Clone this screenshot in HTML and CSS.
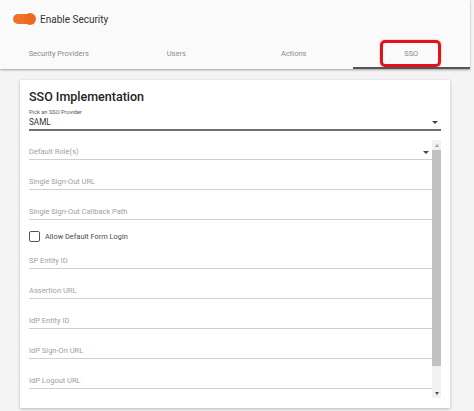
FILE: index.html
```html
<!DOCTYPE html>
<html>
<head>
<meta charset="utf-8">
<link rel="stylesheet" href="styles.css">
</head>
<body>
<div class="page">
  <header class="header">
    <div class="toggle-row">
      <span class="toggle"><span class="knob"></span></span>
      <span class="toggle-label">Enable Security</span>
    </div>
    <nav class="tabs">
      <div class="tab">Security Providers</div>
      <div class="tab">Users</div>
      <div class="tab">Actions</div>
      <div class="tab active">SSO</div>
    </nav>
    <div class="highlight"></div>
  </header>

  <section class="card">
    <h1 class="title">SSO Implementation</h1>
    <div class="select">
      <div class="select-label">Pick an SSO Provider</div>
      <div class="select-value">SAML <span class="arrow"></span></div>
    </div>
    <div class="scroll">
      <div class="fields">
        <div class="field first">Default Role(s) <span class="arrow"></span></div>
        <div class="field">Single Sign-Out URL</div>
        <div class="field">Single Sign-Out Callback Path</div>
        <label class="check-row"><span class="checkbox"></span>Allow Default Form Login</label>
        <div class="field after-check">SP Entity ID</div>
        <div class="field">Assertion URL</div>
        <div class="field">IdP Entity ID</div>
        <div class="field">IdP Sign-On URL</div>
        <div class="field">IdP Logout URL</div>
      </div>
      <div class="scrollbar">
        <span class="sb-up"></span>
        <span class="sb-thumb"></span>
        <span class="sb-down"></span>
      </div>
    </div>
  </section>
</div>
</body>
</html>
```
FILE: styles.css
```css
* { box-sizing: border-box; }
html, body {
  margin: 0;
  padding: 0;
}
body {
  background: #f4f4f4;
  font-family: Roboto, "Liberation Sans", sans-serif;
  width: 474px;
  height: 411px;
  overflow: hidden;
}
.page {
  display: flex;
  flex-direction: column;
}
.header {
  position: relative;
  width: 470px;
  height: 69px;
  background: #fafafa;
  box-shadow: 0 1px 2px rgba(0,0,0,0.35);
  display: flex;
  flex-direction: column;
}
.toggle-row {
  height: 38px;
  display: flex;
  align-items: center;
  padding-left: 13px;
}
.toggle {
  position: relative;
  width: 22px;
  height: 10px;
  border-radius: 5px;
  background: #ee7326;
}
.knob {
  position: absolute;
  right: -1px;
  top: -1px;
  width: 12px;
  height: 12px;
  border-radius: 50%;
  background: #ec6c1e;
}
.toggle-label {
  margin-left: 5px;
  font-size: 10px;
  color: #333;
}
.tabs {
  flex: 1;
  display: grid;
  grid-template-columns: repeat(4, 1fr);
}
.tab {
  display: flex;
  align-items: center;
  justify-content: center;
  font-size: 7.5px;
  color: #8c8c8c;
}
.tab.active {
  border-bottom: 2px solid #555;
  padding-top: 2px;
}
.highlight {
  position: absolute;
  left: 380px;
  top: 40px;
  width: 61px;
  height: 27px;
  border: 3px solid #e0121a;
  border-radius: 5px;
  box-shadow: 0 0 2px rgba(200,0,0,0.4);
}
.card {
  margin: 11px 0 0 20px;
  width: 430px;
  height: 328px;
  background: #fff;
  box-shadow: 0 1px 3px rgba(0,0,0,0.25);
  padding: 8px 9px 0 9px;
  overflow: hidden;
}
.title {
  margin: 0;
  font-size: 12.5px;
  line-height: 18px;
  font-weight: 500;
  color: #222;
}
.select {
  margin-top: 2px;
  border-bottom: 2px solid #707070;
}
.select-label {
  font-size: 5.7px;
  line-height: 8px;
  color: #555;
}
.select-value {
  position: relative;
  font-size: 8.2px;
  line-height: 12px;
  color: #333;
  padding-bottom: 1px;
}
.arrow {
  position: absolute;
  right: 3px;
  top: 5px;
  width: 0;
  height: 0;
  border-left: 3px solid transparent;
  border-right: 3px solid transparent;
  border-top: 3px solid #444;
}
.scroll {
  display: flex;
}
.fields {
  flex: 1;
  display: flex;
  flex-direction: column;
}
.field {
  position: relative;
  margin-top: 16px;
  font-size: 7.5px;
  line-height: 12px;
  color: #a0a0a0;
  padding-bottom: 1px;
  border-bottom: 1px solid #d0d0d0;
}
.field.first { margin-top: 15px; }
.field.after-check { margin-top: 13px; }
.check-row {
  margin-top: 10px;
  height: 12px;
  display: flex;
  align-items: center;
  font-size: 7.4px;
  color: #4a4a4a;
}
.checkbox {
  width: 11px;
  height: 11px;
  border: 1.5px solid #555;
  border-radius: 2px;
  margin-right: 5px;
}
.scrollbar {
  margin-top: 9px;
  width: 9px;
  height: 258px;
  background: #f1f1f1;
  display: flex;
  flex-direction: column;
  align-items: center;
}
.sb-up {
  margin-top: 4px;
  width: 0;
  height: 0;
  border-left: 2.5px solid transparent;
  border-right: 2.5px solid transparent;
  border-bottom: 3px solid #a0a0a0;
}
.sb-thumb {
  margin-top: 3px;
  width: 9px;
  height: 216px;
  background: #c1c1c1;
}
.sb-down {
  margin-top: 26px;
  width: 0;
  height: 0;
  border-left: 2.5px solid transparent;
  border-right: 2.5px solid transparent;
  border-top: 3px solid #505050;
}
```
